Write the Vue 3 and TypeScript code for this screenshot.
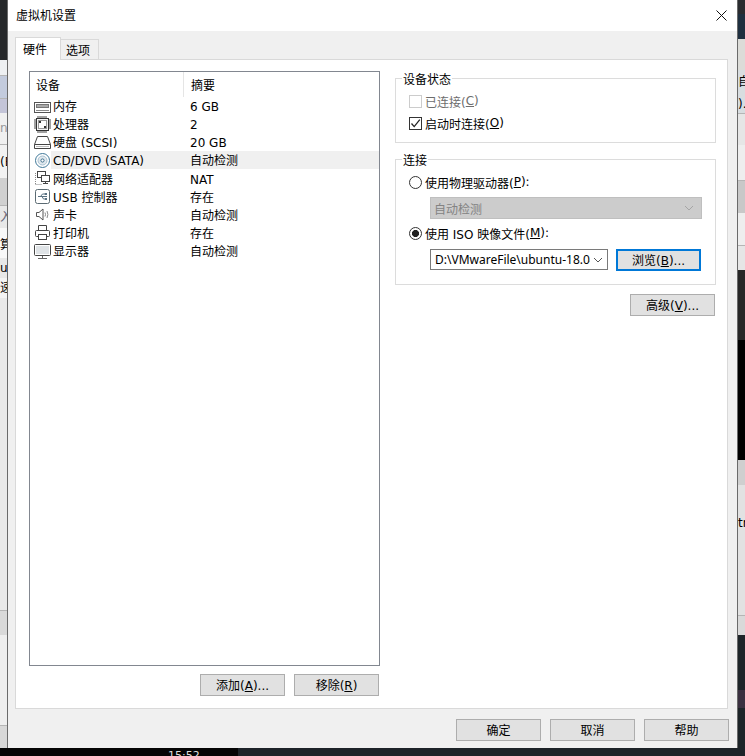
<script setup lang="ts">
interface Seg { h: number; bg: string; text?: string; color?: string; line?: boolean }
interface Device { icon: string; name: string; summary: string; selected?: boolean }

const leftStrip: Seg[] = [
  { h: 60, bg: '#26282a' },
  { h: 15, bg: '#eef0f2' },
  { h: 23, bg: '#c3cbdd', line: true },
  { h: 15, bg: '#c4c5d8', line: true },
  { h: 31, bg: '#f0f0f0', text: 'n', color: '#999' },
  { h: 34, bg: '#f2f2f2', text: '(E', line: true },
  { h: 27, bg: '#d0d0d0' },
  { h: 23, bg: '#e8e8e8', text: '入', color: '#667', line: true },
  { h: 4, bg: '#f8f8f8' },
  { h: 26, bg: '#f8f8f8', text: '算' },
  { h: 20, bg: '#e8e8e8', text: 'ur' },
  { h: 20, bg: '#f4f4f4', text: '速' },
  { h: 312, bg: '#e9e9e9' },
  { h: 25, bg: '#d9d9d9', line: true },
  { h: 90, bg: '#eeeeee' },
  { h: 23, bg: '#d8d8d8', line: true }
]

const rightStrip: Seg[] = [
  { h: 14, bg: '#2a2c30' },
  { h: 25, bg: '#1f3040' },
  { h: 31, bg: '#dcdcd8' },
  { h: 25, bg: '#d8dde0', text: '自' },
  { h: 18, bg: '#d8dde0', text: ').' },
  { h: 32, bg: '#e6e6e6', line: true },
  { h: 35, bg: '#eeeeee' },
  { h: 33, bg: '#c8c8c8', line: true },
  { h: 32, bg: '#eeeeee' },
  { h: 25, bg: '#e6e6e6', line: true },
  { h: 70, bg: '#272727' },
  { h: 120, bg: '#000000' },
  { h: 25, bg: '#cfcfcf' },
  { h: 76, bg: '#e2e2e2', text: 'tr' },
  { h: 54, bg: '#e2e2e2' },
  { h: 20, bg: '#d9d9d9', line: true },
  { h: 55, bg: '#1d2428' },
  { h: 18, bg: '#3a3040' },
  { h: 40, bg: '#1d2428' }
]

const devices: Device[] = [
  { icon: 'memory', name: '内存', summary: '6 GB' },
  { icon: 'cpu', name: '处理器', summary: '2' },
  { icon: 'disk', name: '硬盘 (SCSI)', summary: '20 GB' },
  { icon: 'cd', name: 'CD/DVD (SATA)', summary: '自动检测', selected: true },
  { icon: 'net', name: '网络适配器', summary: 'NAT' },
  { icon: 'usb', name: 'USB 控制器', summary: '存在' },
  { icon: 'sound', name: '声卡', summary: '自动检测' },
  { icon: 'printer', name: '打印机', summary: '存在' },
  { icon: 'display', name: '显示器', summary: '自动检测' }
]
</script>

<template>
  <div class="desktop">
    <div class="strip">
      <div
        v-for="(s, i) in leftStrip"
        :key="i"
        class="seg"
        :class="{ lined: s.line }"
        :style="{ height: s.h + 'px', lineHeight: s.h + 'px', background: s.bg, color: s.color }"
      >{{ s.text }}</div>
    </div>

    <section class="dialog">
      <header class="titlebar">
        <span class="title">虚拟机设置</span>
        <svg class="close" width="11" height="11" viewBox="0 0 11 11">
          <path d="M0.5 0.5L10.5 10.5M10.5 0.5L0.5 10.5" stroke="#111" stroke-width="1" fill="none" />
        </svg>
      </header>

      <div class="body">
        <div class="tabs">
          <div class="tab active">硬件</div>
          <div class="tab">选项</div>
        </div>

        <div class="panel">
          <div class="left">
            <div class="list">
              <div class="list-head">
                <div class="head-device">设备</div>
                <div class="head-summary">摘要</div>
              </div>
              <div v-for="d in devices" :key="d.name" class="row">
                <svg class="icon" width="17" height="17" viewBox="0 0 17 17" fill="none" stroke="#555" stroke-width="1">
                  <template v-if="d.icon === 'memory'">
                    <rect x="0.5" y="4.5" width="16" height="10" fill="#fff" />
                    <rect x="2.5" y="6.5" width="12" height="3" fill="#aaa" stroke="#777" />
                    <path d="M2 12.5H15" stroke="#888" />
                  </template>
                  <template v-else-if="d.icon === 'cpu'">
                    <rect x="2.5" y="2.5" width="12" height="12" fill="#f4f4f4" stroke="#333" />
                    <rect x="4.5" y="4.5" width="8" height="8" fill="#fff" stroke="#999" />
                    <path d="M4 0V2M6 0V2M8 0V2M10 0V2M12 0V2M4 15V17M6 15V17M8 15V17M10 15V17M12 15V17M0 4H2M0 6H2M0 8H2M0 10H2M0 12H2M15 4H17M15 6H17M15 8H17M15 10H17M15 12H17" stroke="#444" />
                    <path d="M5 5H7V7H5ZM10 10H12V12H10Z" fill="#333" stroke="none" />
                  </template>
                  <template v-else-if="d.icon === 'disk'">
                    <path d="M0.5 10.5L3.5 2.5H13.5L16.5 10.5V14.5H0.5Z" fill="#fff" stroke="#444" />
                    <path d="M0.5 10.5H16.5" stroke="#444" />
                    <path d="M2 12.5H15" stroke="#bbb" />
                  </template>
                  <template v-else-if="d.icon === 'cd'">
                    <circle cx="8.5" cy="8.5" r="7" fill="#fff" stroke="#3f7899" />
                    <circle cx="8.5" cy="8.5" r="4.5" fill="#dfe8ee" stroke="#a9c1d0" />
                    <circle cx="8.5" cy="8.5" r="1.6" fill="#fff" stroke="#3f6f8c" />
                  </template>
                  <template v-else-if="d.icon === 'net'">
                    <rect x="3.5" y="1.5" width="8" height="6" fill="#fff" stroke="#444" />
                    <rect x="7.5" y="5.5" width="8" height="6" fill="#fff" stroke="#444" />
                    <path d="M9 13.5H14M11.5 12V13" stroke="#444" />
                    <path d="M1.5 3V14.5M1.5 14.5H8" stroke="#888" stroke-dasharray="1 1" />
                  </template>
                  <template v-else-if="d.icon === 'usb'">
                    <rect x="1.5" y="1.5" width="14" height="14" rx="2" fill="#fff" stroke="#5a6a72" />
                    <path d="M4 8.5H13M6.5 8.5L8.5 6H10.5M8 8.5L9.5 11H11" stroke="#5a7282" />
                    <path d="M10.5 7H13V5H10.5ZM11 12H13V10H11Z" fill="#5a7282" stroke="none" />
                  </template>
                  <template v-else-if="d.icon === 'sound'">
                    <path d="M2.5 6.5H5L9 3V14L5 10.5H2.5Z" fill="#fff" stroke="#555" />
                    <path d="M11 6.5Q12 8.5 11 10.5M13 5Q14.8 8.5 13 12" stroke="#888" />
                  </template>
                  <template v-else-if="d.icon === 'printer'">
                    <path d="M4.5 6.5V1.5H12.5V6.5" fill="#fff" stroke="#444" />
                    <rect x="1.5" y="6.5" width="14" height="6" rx="1" fill="#fff" stroke="#444" />
                    <rect x="4.5" y="10.5" width="8" height="5" fill="#fff" stroke="#444" />
                  </template>
                  <template v-else>
                    <rect x="0.5" y="1.5" width="16" height="11" rx="1" fill="#fff" stroke="#444" stroke-width="1" />
                    <rect x="2" y="3" width="13" height="8" fill="#dfe3e6" stroke="none" />
                    <path d="M4 15.5H13M8.5 13V15" stroke="#666" />
                  </template>
                </svg>
                <div class="cells" :class="{ selected: d.selected }">
                  <span class="name">{{ d.name }}</span>
                  <span class="summary">{{ d.summary }}</span>
                </div>
              </div>
            </div>
            <div class="list-actions">
              <button class="btn">添加(<u>A</u>)...</button>
              <button class="btn">移除(<u>R</u>)</button>
            </div>
          </div>

          <div class="right">
            <div class="group status">
              <div class="legend">设备状态</div>
              <label class="opt disabled">
                <span class="check off"></span>已连接(<u>C</u>)
              </label>
              <label class="opt">
                <span class="check">
                  <svg width="11" height="11" viewBox="0 0 11 11"><path d="M1.5 5.5L4.2 8.6L9.8 1.6" stroke="#222" stroke-width="1.3" fill="none" /></svg>
                </span>启动时连接(<u>O</u>)
              </label>
            </div>

            <div class="group connect">
              <div class="legend">连接</div>
              <label class="opt">
                <span class="radio"></span>使用物理驱动器(<u>P</u>):
              </label>
              <div class="combo combo-off">
                <span>自动检测</span>
                <svg width="10" height="6" viewBox="0 0 10 6"><path d="M1 1L5 5L9 1" stroke="#a5a5a5" fill="none" /></svg>
              </div>
              <label class="opt">
                <span class="radio on"></span>使用 ISO 映像文件(<u>M</u>):
              </label>
              <div class="iso-row">
                <div class="combo combo-iso">
                  <span class="iso-text">D:\VMwareFile\ubuntu-18.04.iso</span>
                  <svg width="10" height="6" viewBox="0 0 10 6"><path d="M1 1L5 5L9 1" stroke="#555" fill="none" /></svg>
                </div>
                <button class="btn focus">浏览(<u>B</u>)...</button>
              </div>
            </div>

            <div class="advanced">
              <button class="btn">高级(<u>V</u>)...</button>
            </div>
          </div>
        </div>

        <footer class="footer">
          <button class="btn">确定</button>
          <button class="btn">取消</button>
          <button class="btn">帮助</button>
        </footer>
      </div>
    </section>

    <div class="strip">
      <div
        v-for="(s, i) in rightStrip"
        :key="i"
        class="seg"
        :class="{ lined: s.line }"
        :style="{ height: s.h + 'px', lineHeight: s.h + 'px', background: s.bg, color: s.color }"
      >{{ s.text }}</div>
    </div>

    <div class="taskbar">
      <div class="task-left"><span class="clock">15:52</span></div>
      <div class="task-right"></div>
    </div>
  </div>
</template>

<style scoped>
.desktop {
  width: 745px;
  height: 756px;
  overflow: hidden;
  display: grid;
  grid-template-columns: 7px 731px 7px;
  grid-template-rows: 748px 8px;
  font-family: "DejaVu Sans", "Noto Sans CJK SC", sans-serif;
  font-size: 12px;
  color: #000;
  background: #111;
}
.strip {
  overflow: hidden;
  display: flex;
  flex-direction: column;
}
.seg {
  flex: none;
  overflow: hidden;
  white-space: nowrap;
  box-sizing: border-box;
}
.lined {
  border-top: 1px solid #b5b5b5;
}
.dialog {
  display: flex;
  flex-direction: column;
  box-sizing: border-box;
  border-left: 1px solid #6a6a6a;
  border-right: 1px solid #6a6a6a;
  background: #f0f0f0;
}
.titlebar {
  flex: none;
  height: 31px;
  padding: 0 10px 0 8px;
  display: flex;
  align-items: center;
  justify-content: space-between;
  background: #fff;
}
.title {
  line-height: 31px;
  padding-top: 1px;
}
.body {
  flex: 1;
  min-height: 0;
  display: flex;
  flex-direction: column;
  padding: 7px 9px 8px 7px;
}
.tabs {
  flex: none;
  height: 21px;
  display: flex;
  align-items: flex-end;
}
.tab {
  box-sizing: border-box;
  width: 39px;
  height: 20px;
  margin-left: -1px;
  padding-left: 5px;
  border: 1px solid #d9d9d9;
  border-bottom: 0;
  line-height: 22px;
  background: #f0f0f0;
}
.tab.active {
  position: relative;
  z-index: 1;
  width: 46px;
  height: 23px;
  margin-left: 0;
  margin-bottom: -1px;
  padding-left: 7px;
  background: #fff;
  line-height: 24px;
}
.panel {
  flex: none;
  box-sizing: border-box;
  height: 650px;
  display: flex;
  padding: 11px 11px 12px 13px;
  background: #fff;
  border: 1px solid #d9d9d9;
}
.left {
  flex: none;
  width: 351px;
  display: flex;
  flex-direction: column;
  gap: 8px;
}
.list {
  flex: 1;
  min-height: 0;
  box-sizing: border-box;
  border: 1px solid #828790;
  overflow: hidden;
}
.list-head {
  height: 25px;
  display: flex;
  line-height: 29px;
}
.head-device {
  box-sizing: border-box;
  width: 154px;
  height: 25px;
  padding-left: 6px;
  border-right: 1px solid #e5e5e5;
}
.head-summary {
  padding-left: 7px;
}
.row {
  height: 18.125px;
  display: flex;
  align-items: center;
  padding-left: 4px;
}
.icon {
  flex: none;
  width: 17px;
}
.cells {
  flex: 1;
  height: 18px;
  display: flex;
  line-height: 20px;
  padding-left: 2px;
}
.cells.selected {
  background: #f0f0f0;
}
.name {
  width: 137px;
  white-space: nowrap;
}
.summary {
  white-space: nowrap;
}
.list-actions {
  flex: none;
  display: flex;
  justify-content: flex-end;
  gap: 9px;
  padding-right: 1px;
}
.btn {
  flex: none;
  box-sizing: border-box;
  width: 85px;
  height: 22px;
  padding: 2px 0 0;
  border: 1px solid #adadad;
  border-radius: 0;
  background: #e1e1e1;
  font: inherit;
  color: #000;
  line-height: 18px;
}
.btn.focus {
  border: 2px solid #0078d7;
  padding-top: 1px;
}
.right {
  flex: none;
  width: 321px;
  margin-left: 15px;
  padding-top: 7px;
  display: flex;
  flex-direction: column;
}
.group {
  box-sizing: border-box;
  border: 1px solid #dcdcdc;
  padding: 0 0 0 13px;
}
.status {
  height: 65px;
}
.connect {
  height: 126px;
  margin-top: 16px;
}
.legend {
  width: fit-content;
  margin: -7px 0 0 -7px;
  padding: 0 1px;
  background: #fff;
  line-height: 16px;
}
.opt {
  display: flex;
  align-items: center;
  height: 22px;
  white-space: pre;
}
.opt.disabled {
  color: #6d6d6d;
}
.check {
  box-sizing: border-box;
  flex: none;
  width: 13px;
  height: 13px;
  margin-right: 3px;
  border: 1px solid #333;
  display: flex;
  align-items: center;
  justify-content: center;
  background: #fff;
}
.check.off {
  border-color: #ccc;
}
.radio {
  box-sizing: border-box;
  flex: none;
  width: 13px;
  height: 13px;
  margin-right: 3px;
  border: 1px solid #333;
  border-radius: 50%;
  background: #fff;
}
.radio.on {
  background: radial-gradient(circle, #222 0 3.3px, #fff 3.8px);
}
.status .opt:first-of-type {
  margin-top: 2px;
}
.connect .opt:first-of-type {
  margin-top: 2px;
}
.combo {
  box-sizing: border-box;
  display: flex;
  align-items: center;
  justify-content: space-between;
  border: 1px solid #7a7a7a;
  background: #fff;
}
.combo-off {
  width: 272px;
  height: 22px;
  margin: 4px 0 3px 21px;
  padding: 0 7px 0 3px;
  border-color: #bfbfbf;
  background: #cccccc;
  color: #838383;
}
.iso-row {
  display: flex;
  gap: 8px;
  margin: 5px 0 0 21px;
}
.combo-iso {
  width: 178px;
  height: 21px;
  padding: 0 4px;
}
.iso-text {
  display: block;
  width: 155px;
  overflow: hidden;
  white-space: nowrap;
  font-family: "Noto Sans", sans-serif;
  font-size: 12px;
}
.advanced {
  display: flex;
  justify-content: flex-end;
  padding-right: 1px;
  margin-top: 9px;
}
.footer {
  flex: none;
  display: flex;
  justify-content: flex-end;
  gap: 9px;
  margin: 10px -1px 0 0;
}
.taskbar {
  grid-column: 1 / -1;
  display: flex;
  overflow: hidden;
}
.task-left {
  width: 238px;
  background: #050505;
}
.clock {
  display: block;
  padding-left: 168px;
  font-size: 11px;
  line-height: 15px;
  color: #ddd;
}
.task-right {
  flex: 1;
  background: #1d2328;
}
</style>
